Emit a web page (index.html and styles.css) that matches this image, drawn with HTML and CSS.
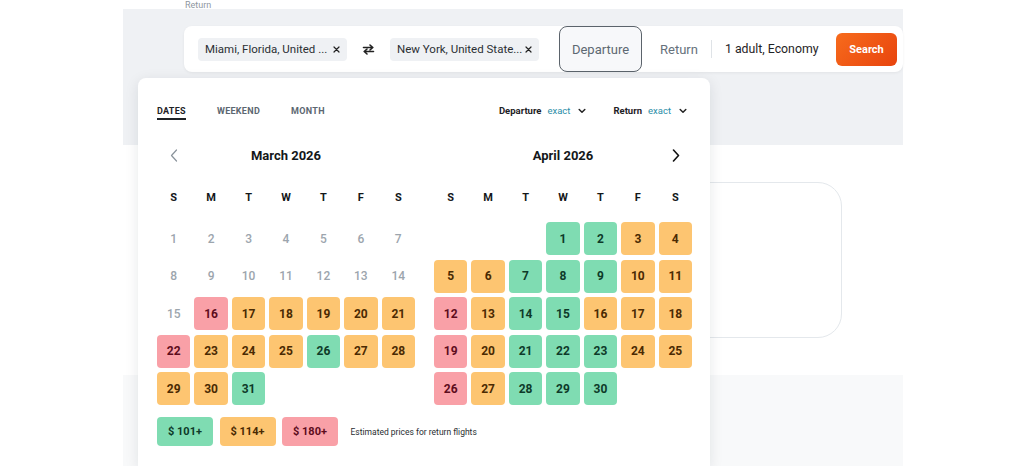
FILE: index.html
```html
<!DOCTYPE html>
<html>
<head>
<meta charset="utf-8">
<link rel="stylesheet" href="styles.css">
</head>
<body>
<div class="page">
  <div class="top-clip"><span class="clip-label">Return</span></div>
  <div class="hero">
    <div class="bar">
      <div class="chip"><span class="chip-text">Miami, Florida, United ...</span><svg class="chip-x" width="7" height="7" viewBox="0 0 7 7"><path d="M1 1l5 5M6 1L1 6" stroke="#222" stroke-width="1.2" stroke-linecap="round"/></svg></div>
      <div class="swap">
        <svg width="13" height="11" viewBox="0 0 13 11"><path d="M1.5 3.5h9M8 1l2.8 2.5L8 6" fill="none" stroke="#222" stroke-width="1.6" stroke-linecap="round" stroke-linejoin="round"/><path d="M11.5 7.5h-9M5 5L2.2 7.5 5 10" fill="none" stroke="#222" stroke-width="1.6" stroke-linecap="round" stroke-linejoin="round"/></svg>
      </div>
      <div class="chip"><span class="chip-text">New York, United State...</span><svg class="chip-x" width="7" height="7" viewBox="0 0 7 7"><path d="M1 1l5 5M6 1L1 6" stroke="#222" stroke-width="1.2" stroke-linecap="round"/></svg></div>
      <div class="date-box">Departure</div>
      <div class="return-field">Return</div>
      <div class="divider"></div>
      <div class="pax">1 adult, Economy</div>
      <button class="search">Search</button>
    </div>
  </div>
  <div class="mid">
    <div class="card"></div>
  </div>
  <div class="bottom"></div>
</div>

<div class="popup">
  <div class="popup-top">
    <div class="tabs">
      <span class="tab active">DATES</span>
      <span class="tab">WEEKEND</span>
      <span class="tab">MONTH</span>
    </div>
    <div class="modes">
      <span class="mode"><b>Departure</b><span class="exact">exact</span><svg class="chev" width="8" height="6" viewBox="0 0 8 6"><path d="M1.2 1.5L4 4.2l2.8-2.7" fill="none" stroke="#222" stroke-width="1.5" stroke-linecap="round" stroke-linejoin="round"/></svg></span>
      <span class="mode"><b>Return</b><span class="exact">exact</span><svg class="chev" width="8" height="6" viewBox="0 0 8 6"><path d="M1.2 1.5L4 4.2l2.8-2.7" fill="none" stroke="#222" stroke-width="1.5" stroke-linecap="round" stroke-linejoin="round"/></svg></span>
    </div>
  </div>

  <div class="months">
    <div class="month">
      <div class="month-head">
        <span class="arrow"><svg width="8" height="13" viewBox="0 0 8 13"><path d="M6.5 1L1.5 6.5l5 5.5" fill="none" stroke="#8a939b" stroke-width="1.2" stroke-linecap="round" stroke-linejoin="round"/></svg></span>
        <span class="month-title">March 2026</span>
        <span class="arrow"></span>
      </div>
      <div class="weekdays"><span>S</span><span>M</span><span>T</span><span>W</span><span>T</span><span>F</span><span>S</span></div>
      <div class="days">
        <span class="d off">1</span><span class="d off">2</span><span class="d off">3</span><span class="d off">4</span><span class="d off">5</span><span class="d off">6</span><span class="d off">7</span>
        <span class="d off">8</span><span class="d off">9</span><span class="d off">10</span><span class="d off">11</span><span class="d off">12</span><span class="d off">13</span><span class="d off">14</span>
        <span class="d off">15</span><span class="d r">16</span><span class="d o">17</span><span class="d o">18</span><span class="d o">19</span><span class="d o">20</span><span class="d o">21</span>
        <span class="d r">22</span><span class="d o">23</span><span class="d o">24</span><span class="d o">25</span><span class="d g">26</span><span class="d o">27</span><span class="d o">28</span>
        <span class="d o">29</span><span class="d o">30</span><span class="d g">31</span>
      </div>
    </div>
    <div class="month">
      <div class="month-head">
        <span class="arrow"></span>
        <span class="month-title">April 2026</span>
        <span class="arrow"><svg width="8" height="13" viewBox="0 0 8 13"><path d="M1.5 1l5 5.5-5 5.5" fill="none" stroke="#111" stroke-width="1.6" stroke-linecap="round" stroke-linejoin="round"/></svg></span>
      </div>
      <div class="weekdays"><span>S</span><span>M</span><span>T</span><span>W</span><span>T</span><span>F</span><span>S</span></div>
      <div class="days">
        <span class="d g start-wed">1</span><span class="d g">2</span><span class="d o">3</span><span class="d o">4</span>
        <span class="d o">5</span><span class="d o">6</span><span class="d g">7</span><span class="d g">8</span><span class="d g">9</span><span class="d o">10</span><span class="d o">11</span>
        <span class="d r">12</span><span class="d o">13</span><span class="d g">14</span><span class="d g">15</span><span class="d o">16</span><span class="d o">17</span><span class="d o">18</span>
        <span class="d r">19</span><span class="d o">20</span><span class="d g">21</span><span class="d g">22</span><span class="d g">23</span><span class="d o">24</span><span class="d o">25</span>
        <span class="d r">26</span><span class="d o">27</span><span class="d g">28</span><span class="d g">29</span><span class="d g">30</span>
      </div>
    </div>
  </div>

  <div class="legend">
    <span class="lg g">$ 101+</span>
    <span class="lg o">$ 114+</span>
    <span class="lg r">$ 180+</span>
    <span class="legend-note">Estimated prices for return flights</span>
  </div>
</div>
</body>
</html>
```

FILE: styles.css
```css
html, body {
  margin: 0;
  padding: 0;
  height: 466px;
  overflow: hidden;
  background: #ffffff;
  font-family: Roboto, "Noto Sans", Arial, sans-serif;
  color: #222;
}

.page {
  width: 780px;
  margin-left: 123px;
  display: flex;
  flex-direction: column;
}

.top-clip {
  height: 9px;
  overflow: hidden;
  padding-left: 62px;
}
.clip-label {
  display: block;
  font-size: 9px;
  line-height: 9px;
  padding-top: 1px;
  color: #8e979f;
}

.hero {
  background: #eff1f4;
  height: 136px;
  box-sizing: border-box;
  padding-top: 17px;
  padding-left: 61px;
}

.bar {
  height: 46px;
  background: #ffffff;
  border-radius: 8px;
  box-shadow: 0 1px 3px rgba(0,0,0,0.06);
  display: flex;
  align-items: center;
  padding-left: 14px;
  padding-right: 6px;
}

.chip {
  width: 149px;
  height: 23px;
  box-sizing: border-box;
  background: #eff1f4;
  border-radius: 4px;
  display: flex;
  align-items: center;
  justify-content: space-between;
  padding: 0 7px 0 7px;
  font-size: 11.5px;
  color: #2b2f33;
}

.swap {
  width: 43px;
  display: flex;
  justify-content: center;
  align-items: center;
}

.date-box {
  margin-left: 20px;
  width: 83px;
  height: 46px;
  box-sizing: border-box;
  border: 1px solid #5b636b;
  border-radius: 8px;
  background: #f7f8fa;
  display: flex;
  align-items: center;
  justify-content: center;
  font-size: 13px;
  color: #5d6872;
}

.return-field {
  margin-left: 18px;
  font-size: 13px;
  color: #66717b;
}

.divider {
  width: 1px;
  height: 18px;
  background: #dfe3e7;
  margin-left: 13px;
}

.pax {
  margin-left: 13px;
  font-size: 12.3px;
  color: #1f2326;
}

.search {
  margin-left: auto;
  width: 61px;
  height: 33px;
  border: none;
  border-radius: 6px;
  background: linear-gradient(135deg, #f76b1c 0%, #e8440e 100%);
  color: #ffffff;
  font-family: inherit;
  font-weight: 700;
  font-size: 11px;
  padding: 0;
}

.mid {
  height: 230px;
  background: #ffffff;
  padding-top: 37px;
  box-sizing: border-box;
  padding-left: 22px;
}
.card {
  width: 697px;
  height: 156px;
  box-sizing: border-box;
  border: 1px solid #e4e8ec;
  border-radius: 24px;
}

.bottom {
  height: 91px;
  background: #f8f9fa;
}

/* Calendar popup overlaying the page */
.popup {
  position: absolute;
  left: 138px;
  top: 78px;
  width: 572px;
  height: 388px;
  box-sizing: border-box;
  background: #ffffff;
  border-radius: 8px 8px 0 0;
  box-shadow: 0 3px 14px rgba(20, 30, 40, 0.10);
  padding: 26px 18px 0 19px;
}

.popup-top {
  display: flex;
  justify-content: space-between;
  align-items: flex-start;
}

.tabs {
  display: flex;
  gap: 31px;
}
.tab {
  font-size: 9px;
  font-weight: 700;
  line-height: 14px;
  color: #5c6771;
  letter-spacing: 0.3px;
  border-bottom: 2px solid transparent;
}
.tab.active {
  color: #1e2226;
  border-bottom-color: #1e2226;
}

.modes {
  display: flex;
  gap: 27px;
  padding-right: 5px;
}
.mode {
  display: flex;
  align-items: center;
  font-size: 9.5px;
  line-height: 14px;
}
.mode b {
  font-weight: 700;
  color: #1e2226;
}
.exact {
  color: #2a8ea8;
  margin-left: 6px;
}
.chev {
  margin-left: 8px;
}

.months {
  margin-top: 24px;
  display: flex;
  gap: 19px;
}
.month {
  width: 258px;
}

.month-head {
  height: 22px;
  display: grid;
  grid-template-columns: 33px 1fr 33px;
  align-items: center;
}
.arrow {
  display: flex;
  justify-content: center;
  align-items: center;
}
.month-title {
  text-align: center;
  font-size: 13px;
  font-weight: 700;
  color: #141719;
}

.weekdays {
  margin-top: 23px;
  height: 16px;
  display: grid;
  grid-template-columns: repeat(7, 1fr);
  column-gap: 4px;
  align-items: center;
  font-size: 11px;
  font-weight: 700;
  color: #141719;
  text-align: center;
}

.days {
  margin-top: 17px;
  display: grid;
  grid-template-columns: repeat(7, 1fr);
  grid-auto-rows: 33px;
  column-gap: 4px;
  row-gap: 4.5px;
}
.d {
  border-radius: 4px;
  display: flex;
  align-items: center;
  justify-content: center;
  font-size: 12px;
  font-weight: 700;
}
.d.off {
  color: #9ca5ad;
  font-weight: 500;
}
.d.g { background: #7fdcb2; color: #0e3a29; }
.d.o { background: #fdc571; color: #4a2a02; }
.d.r { background: #f9a0a7; color: #5e0c1d; }
.start-wed { grid-column-start: 4; }

.legend {
  margin-top: 12px;
  display: flex;
  align-items: center;
}
.lg {
  width: 56px;
  height: 29px;
  border-radius: 4px;
  display: flex;
  align-items: center;
  justify-content: center;
  font-size: 11px;
  font-weight: 700;
  margin-right: 6.5px;
}
.lg.g { background: #7fdcb2; color: #0e3a29; }
.lg.o { background: #fdc571; color: #4a2a02; }
.lg.r { background: #f9a0a7; color: #5e0c1d; }
.legend-note {
  margin-left: 6px;
  font-size: 8.5px;
  color: #2a2e32;
}
```
